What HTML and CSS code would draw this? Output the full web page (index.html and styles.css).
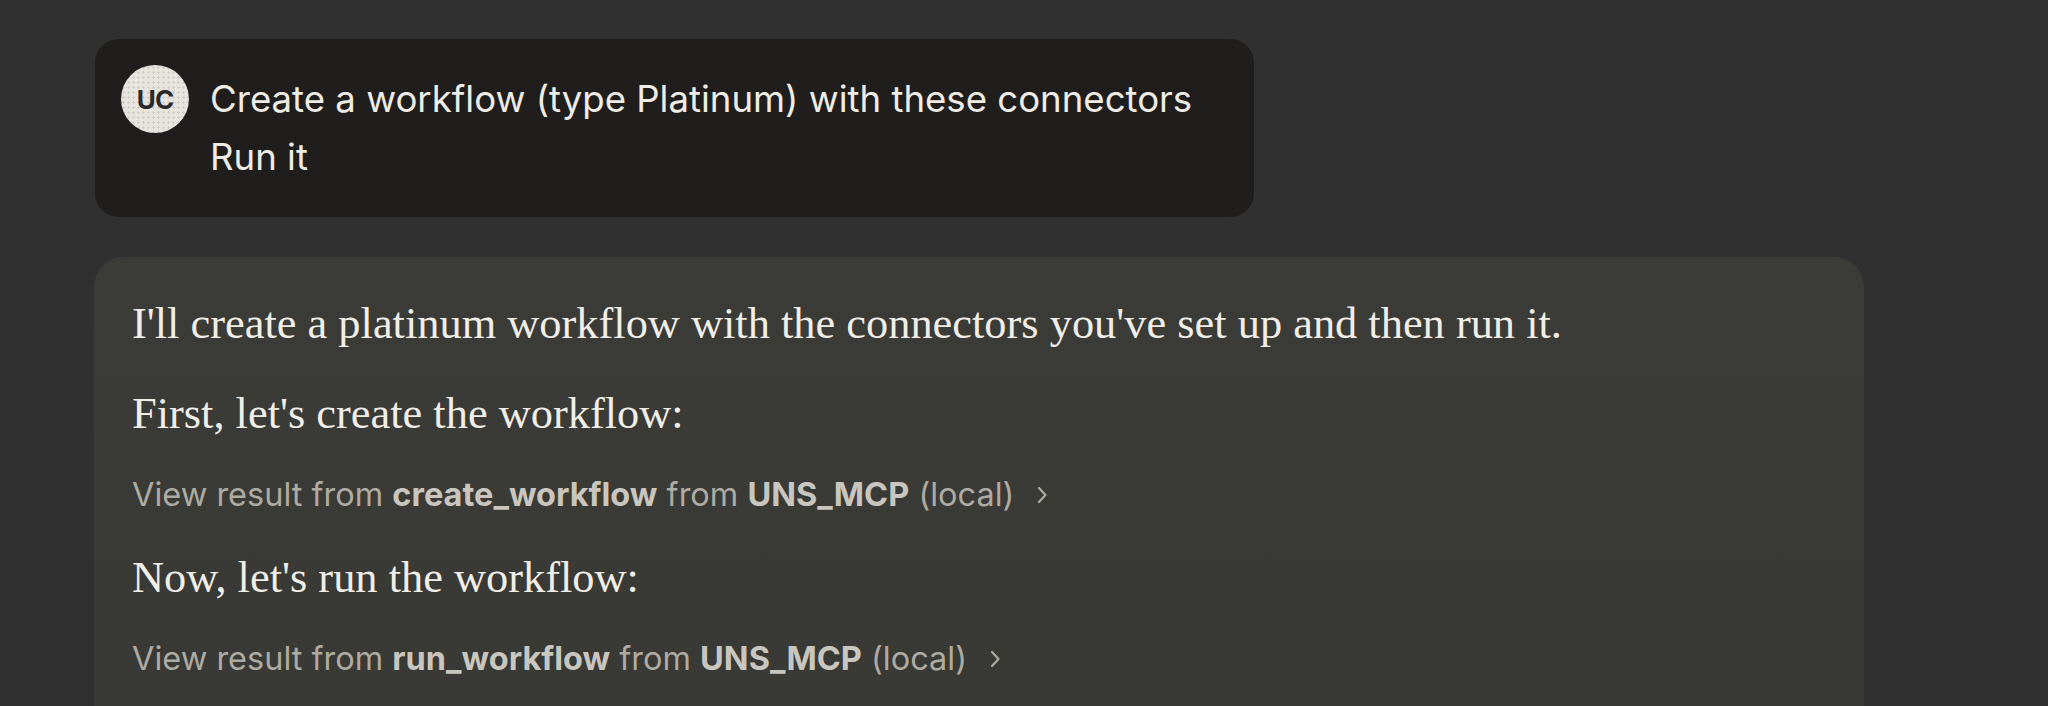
FILE: index.html
```html
<!DOCTYPE html>
<html lang="en">
<head>
<meta charset="utf-8">
<title>Chat</title>
<link rel="stylesheet" href="styles.css">
</head>
<body>
<main class="chat">
  <div class="user-msg">
    <div class="avatar">UC</div>
    <div class="user-text">
      <p>Create a workflow (type Platinum) with these connectors</p>
      <p>Run it</p>
    </div>
  </div>
  <div class="assistant-msg">
    <p class="prose">I'll create a platinum workflow with the connectors you've set up and then run it.</p>
    <p class="prose">First, let's create the workflow:</p>
    <div class="tool"><span class="tool-label">View result from <b>create_workflow</b> from <b>UNS_MCP</b> (local)</span><svg class="chev" viewBox="0 0 12 20" width="12" height="20"><path d="M3 3 L9.5 10 L3 17" fill="none" stroke="currentColor" stroke-width="2.2" stroke-linecap="round" stroke-linejoin="round"/></svg></div>
    <p class="prose">Now, let's run the workflow:</p>
    <div class="tool"><span class="tool-label">View result from <b>run_workflow</b> from <b>UNS_MCP</b> (local)</span><svg class="chev" viewBox="0 0 12 20" width="12" height="20"><path d="M3 3 L9.5 10 L3 17" fill="none" stroke="currentColor" stroke-width="2.2" stroke-linecap="round" stroke-linejoin="round"/></svg></div>
  </div>
</main>
</body>
</html>
```
FILE: styles.css
```css
html, body {
  margin: 0;
  padding: 0;
  background: #303030;
  height: 706px;
  overflow: hidden;
}
.chat {
  display: flex;
  flex-direction: column;
  align-items: flex-start;
  gap: 40px;
  padding: 39px 0 0 94px;
}
.user-msg {
  display: flex;
  align-items: flex-start;
  gap: 21px;
  background: #1f1e1d;
  border-radius: 24px;
  padding: 26px 62px 31px 26px;
  margin-left: 1px;
}
.avatar {
  width: 68px;
  height: 68px;
  border-radius: 50%;
  background-color: #e8e5de;
  background-image: radial-gradient(circle, rgba(0,0,0,0.10) 1px, transparent 1.2px);
  background-size: 5px 5px;
  color: #29282a;
  font-family: Inter, "Liberation Sans", sans-serif;
  font-weight: 700;
  font-size: 26px;
  letter-spacing: -1px;
  display: flex;
  align-items: center;
  justify-content: center;
  flex-shrink: 0;
}
.user-text {
  margin-top: 5px;
  font-family: Inter, "Liberation Sans", sans-serif;
  font-size: 36.6px;
  line-height: 58px;
  color: #efece5;
}
.user-text p {
  margin: 0;
  white-space: nowrap;
}
.assistant-msg {
  width: 1770px;
  box-sizing: border-box;
  background: linear-gradient(180deg, #3b3b37 0%, #383834 100%);
  border-radius: 30px;
  padding: 36px 38px 200px 38px;
  display: flex;
  flex-direction: column;
  gap: 30px;
}
.prose {
  margin: 0;
  font-family: "Liberation Serif", serif;
  font-size: 44.4px;
  line-height: 60px;
  color: #f1eee7;
}
.tool {
  font-family: Inter, "Liberation Sans", sans-serif;
  font-size: 32.5px;
  line-height: 44px;
  color: #aeaba3;
  display: flex;
  align-items: center;
}
.tool-label {
  white-space: nowrap;
}
.tool b {
  font-weight: 700;
  color: #c9c6bf;
}
.chev {
  margin-left: 22px;
  color: #aeaba3;
}
```
